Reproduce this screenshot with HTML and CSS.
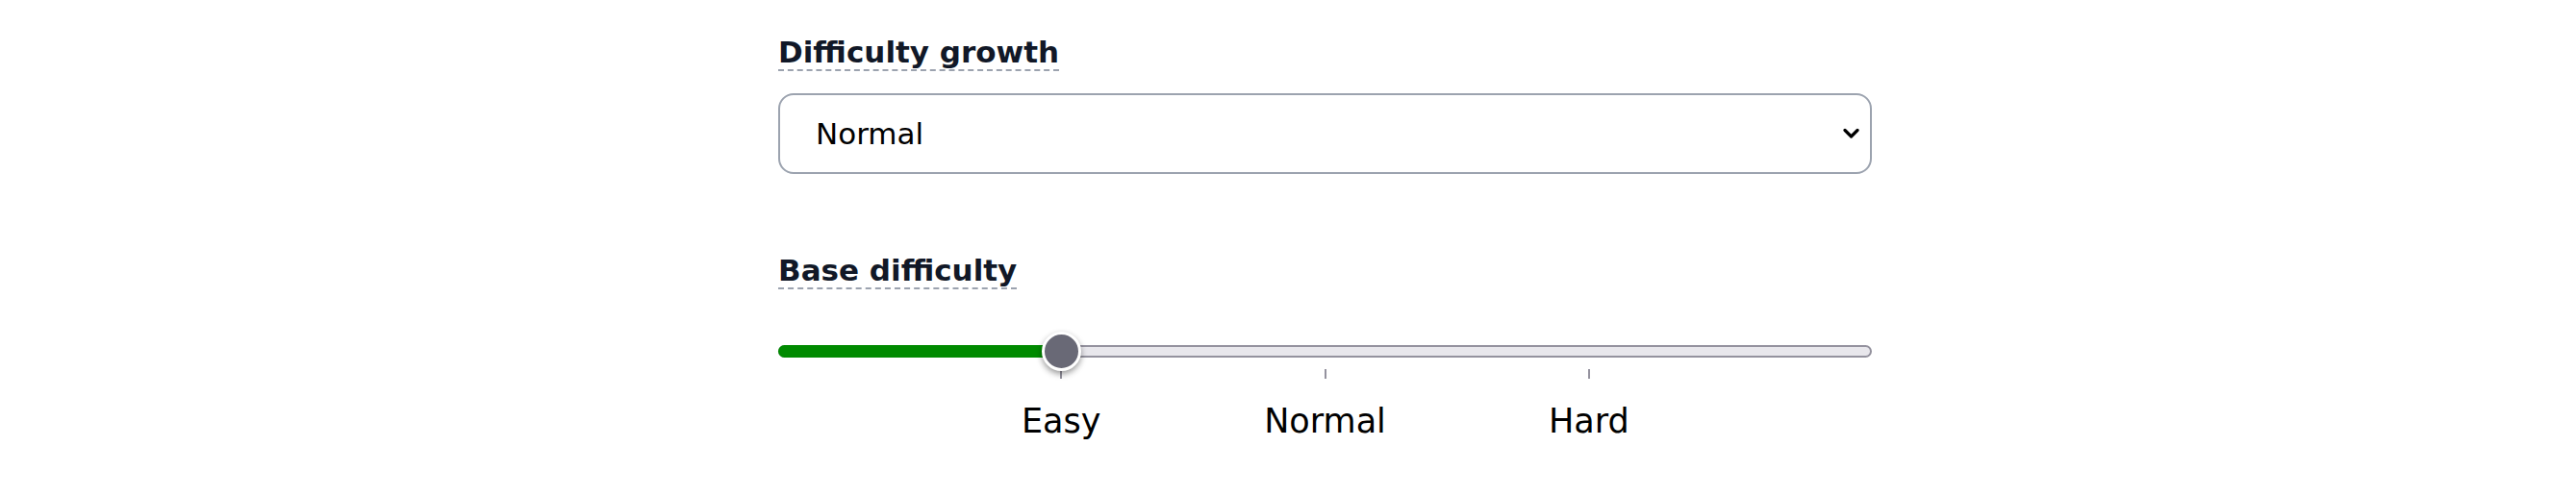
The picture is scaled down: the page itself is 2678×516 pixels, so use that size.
FILE: index.html
```html
<!DOCTYPE html>
<html lang="en">
<head>
<meta charset="utf-8">
<title>Difficulty settings</title>
<link rel="stylesheet" href="styles.css">
</head>
<body>
<main class="form">
  <div class="field">
    <label class="field-label" for="growth">Difficulty growth</label>
    <div class="select-wrap">
      <select id="growth" class="select">
        <option>Easy</option>
        <option selected>Normal</option>
        <option>Hard</option>
      </select>
      <svg class="chevron" width="17" height="12" viewBox="0 0 17 12" aria-hidden="true">
        <path d="M2 2.5 L8.5 9 L15 2.5" fill="none" stroke="#000" stroke-width="3.2" stroke-linecap="round" stroke-linejoin="round"/>
      </svg>
    </div>
  </div>

  <div class="field field-base">
    <span class="field-label">Base difficulty</span>
    <div class="slider" role="slider" aria-valuemin="0" aria-valuemax="4" aria-valuenow="1">
      <div class="track"></div>
      <div class="fill" style="width: 294px"></div>
      <div class="thumb" style="left: 294px"></div>
    </div>
    <div class="stops">
      <div class="stop stop-hidden"><span class="tick"></span><span class="stop-label">&nbsp;</span></div>
      <div class="stop"><span class="tick"></span><span class="stop-label">Easy</span></div>
      <div class="stop"><span class="tick"></span><span class="stop-label">Normal</span></div>
      <div class="stop"><span class="tick"></span><span class="stop-label">Hard</span></div>
      <div class="stop stop-hidden"><span class="tick"></span><span class="stop-label">&nbsp;</span></div>
    </div>
  </div>
</main>
</body>
</html>
```

FILE: styles.css
```css
html, body {
  margin: 0;
  padding: 0;
  background: #ffffff;
}

body {
  font-family: "DejaVu Sans", "Liberation Sans", sans-serif;
  color: #000;
}

.form {
  width: 1137px;
  margin-left: 809px;
  padding-top: 36px;
}

.field-label {
  display: block;
  width: fit-content;
  font-size: 31px;
  font-weight: bold;
  line-height: normal;
  color: #111827;
  border-bottom: 2px dashed #9ca3af;
}

.select-wrap {
  position: relative;
  margin-top: 23px;
}

.select {
  appearance: none;
  -webkit-appearance: none;
  display: block;
  width: 100%;
  height: 84px;
  box-sizing: border-box;
  border: 2px solid #9ca3af;
  border-radius: 16px;
  background: #fff;
  padding: 0 60px 0 37px;
  margin: 0;
  font-family: "DejaVu Sans", "Liberation Sans", sans-serif;
  font-size: 31px;
  color: #000;
}

.chevron {
  position: absolute;
  right: 13px;
  top: 50%;
  transform: translateY(-50%);
  pointer-events: none;
}

.field-base {
  margin-top: 82px;
}

.slider {
  position: relative;
  margin-top: 58px;
  height: 13px;
}

.track {
  height: 13px;
  box-sizing: border-box;
  background: #e8e7ec;
  border: 2px solid #94929e;
  border-radius: 7px;
}

.fill {
  position: absolute;
  left: 0;
  top: 0;
  height: 13px;
  background: #008a00;
  border-radius: 7px 0 0 7px;
}

.thumb {
  position: absolute;
  top: 50%;
  width: 41px;
  height: 41px;
  box-sizing: border-box;
  margin-left: -20.5px;
  margin-top: -20.5px;
  border-radius: 50%;
  background: #696976;
  border: 3px solid #fff;
  box-shadow: 0 3px 6px rgba(0, 0, 0, 0.4);
}

.stops {
  display: flex;
  justify-content: space-between;
  padding: 0 20px;
  margin-top: 12px;
}

.stop {
  width: 0;
  display: flex;
  flex-direction: column;
  align-items: center;
}

.stop-hidden {
  visibility: hidden;
}

.tick {
  display: block;
  width: 2px;
  height: 10px;
  background: #94929e;
}

.stop-label {
  margin-top: 24px;
  font-size: 35px;
  line-height: normal;
  white-space: nowrap;
  color: #000;
}
```
